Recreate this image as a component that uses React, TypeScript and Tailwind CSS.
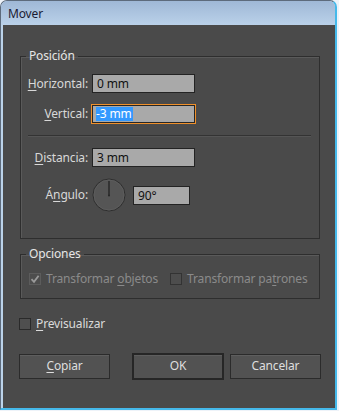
import React from "react";

const font = { fontFamily: '"Noto Sans", "Liberation Sans", sans-serif', letterSpacing: "-0.15px" };

function U({ children }: { children: React.ReactNode }) {
  return <span className="underline underline-offset-2 decoration-1">{children}</span>;
}

function Label({ children }: { children: React.ReactNode }) {
  return (
    <div className="w-[67px] shrink-0 text-right text-[12px] leading-[16px] text-[#d8d8d8] pr-0">
      {children}
    </div>
  );
}

function Input({ value, w = "w-[103px]" }: { value: string; w?: string }) {
  return (
    <div
      className={`${w} h-[19px] bg-[#a9a9a9] border border-[#232323] pl-[4px] text-[12px] leading-[17px] text-[#111]`}
    >
      {value}
    </div>
  );
}

function Checkbox({ checked, disabled }: { checked?: boolean; disabled?: boolean }) {
  return (
    <div
      className={`w-[12px] h-[12px] shrink-0 border ${
        checked ? "border-[#5c5c5c] bg-[#4d4d4d]" : disabled ? "border-[#333333] bg-[#4d4d4d]" : "border-[#2a2a2a] bg-[#4f4f4f]"
      } flex items-center justify-center`}
    >
      {checked && (
        <svg width="10" height="10" viewBox="0 0 10 10">
          <path d="M1.5 5.2 L4 7.8 L8.6 1.8" fill="none" stroke="#9a9a9a" strokeWidth="1.8" />
        </svg>
      )}
    </div>
  );
}

export default function App() {
  return (
    <div className="w-[339px] h-[411px] bg-[#eef3f9] overflow-hidden" style={font}>
      <div className="w-[337px] h-[410px] rounded-t-[7px] border-t border-l border-[#5d6b7c] border-r-2 border-r-[#45b9ea] border-b-2 border-b-[#45b9ea] bg-[#bcd3ea] flex flex-col">
        {/* Title bar */}
        <div className="h-[24px] shrink-0 rounded-t-[6px] bg-gradient-to-b from-[#9fb8d6] to-[#bad1e9] flex items-center pl-[7px]">
          <span className="text-[12px] text-[#1b1b33] leading-[16px] mt-[2px]">Mover</span>
        </div>
        {/* Content */}
        <div className="flex-1 ml-[2px] bg-[#4a4a4a] pl-[17px] pt-[23px]">
          {/* Posición */}
          <fieldset className="w-[300px] border border-[#2e2e2e] shadow-[inset_1px_1px_0_#5a5a5a]">
            <legend className="ml-[5px] px-[3px] text-[12px] leading-[16px] text-[#e6e6e6]">Posición</legend>
            <div className="pb-[26px]">
              <div className="mt-[10px] flex items-center gap-[4px]">
                <Label>
                  <U>H</U>orizontal:
                </Label>
                <Input value="0 mm" />
              </div>
              <div className="mt-[11px] flex items-center gap-[4px]">
                <Label>
                  <U>V</U>ertical:
                </Label>
                <div className="-ml-px w-[105px] h-[20px] border border-[#f0902a] bg-[#a9a9a9] shadow-[inset_0_0_0_1px_#262626] pl-[4px] flex items-center">
                  <span className="inline-block bg-[#3399ff] text-white text-[12px] leading-[14px] pr-[1px]">-3 mm</span>
                </div>
              </div>
              <div className="mt-[11px] ml-[7px] mr-[8px] h-[2px] border-t border-[#333333] border-b border-b-[#555555]" />
              <div className="mt-[11px] flex items-center gap-[4px]">
                <Label>
                  <U>D</U>istancia:
                </Label>
                <Input value="3 mm" />
              </div>
              <div className="mt-[11px] flex items-center gap-[4px]">
                <Label>
                  Á<U>n</U>gulo:
                </Label>
                <svg width="35" height="34" viewBox="0 0 35 34" className="shrink-0">
                  <circle cx="17" cy="17" r="16" fill="#555555" stroke="#2e2e2e" strokeWidth="1" />
                  <circle cx="17" cy="17" r="15" fill="none" stroke="#5e5e5e" strokeWidth="0.8" />
                  <line x1="17" y1="3" x2="17" y2="17.5" stroke="#262626" strokeWidth="1.4" />
                  <circle cx="17" cy="17.5" r="1" fill="#262626" />
                </svg>
                <div className="ml-[2px]">
                  <Input value="90°" w="w-[57px]" />
                </div>
              </div>
            </div>
          </fieldset>

          {/* Opciones */}
          <fieldset className="mt-[7px] w-[300px] border border-[#2e2e2e] shadow-[inset_1px_1px_0_#5a5a5a]">
            <legend className="ml-[5px] px-[3px] text-[12px] leading-[16px] text-[#e6e6e6]">Opciones</legend>
            <div className="pt-[11px] pb-[13px] pl-[8px] flex items-center">
              <Checkbox checked disabled />
              <span className="ml-[5px] text-[12px] leading-[12px] text-[#8a8a8a]">
                Transformar <U>o</U>bjetos
              </span>
              <div className="ml-[12px]">
                <Checkbox disabled />
              </div>
              <span className="ml-[5px] text-[12px] leading-[12px] text-[#8a8a8a]">
                Transformar pa<U>t</U>rones
              </span>
            </div>
          </fieldset>

          {/* Previsualizar */}
          <div className="mt-[19px] -ml-px flex items-center">
            <Checkbox />
            <span className="ml-[5px] text-[12px] leading-[12px] text-[#dadada]">
              <U>P</U>revisualizar
            </span>
          </div>

          {/* Buttons */}
          <div className="mt-[23px] -ml-px flex items-center h-[26px]">
            <button className="w-[91px] h-[25px] bg-[#525252] border border-[#2b2b2b] shadow-[inset_0_1px_0_#5e5e5e] text-[12px] text-[#dedede]">
              <U>C</U>opiar
            </button>
            <button className="ml-[22px] w-[92px] h-[27px] bg-[#525252] border-2 border-[#262626] shadow-[inset_0_1px_0_#5e5e5e] text-[12px] text-[#dedede]">
              OK
            </button>
            <button className="ml-[6px] w-[91px] h-[25px] bg-[#525252] border border-[#2b2b2b] shadow-[inset_0_1px_0_#5e5e5e] text-[12px] text-[#dedede]">
              Cancelar
            </button>
          </div>
        </div>
      </div>
    </div>
  );
}
